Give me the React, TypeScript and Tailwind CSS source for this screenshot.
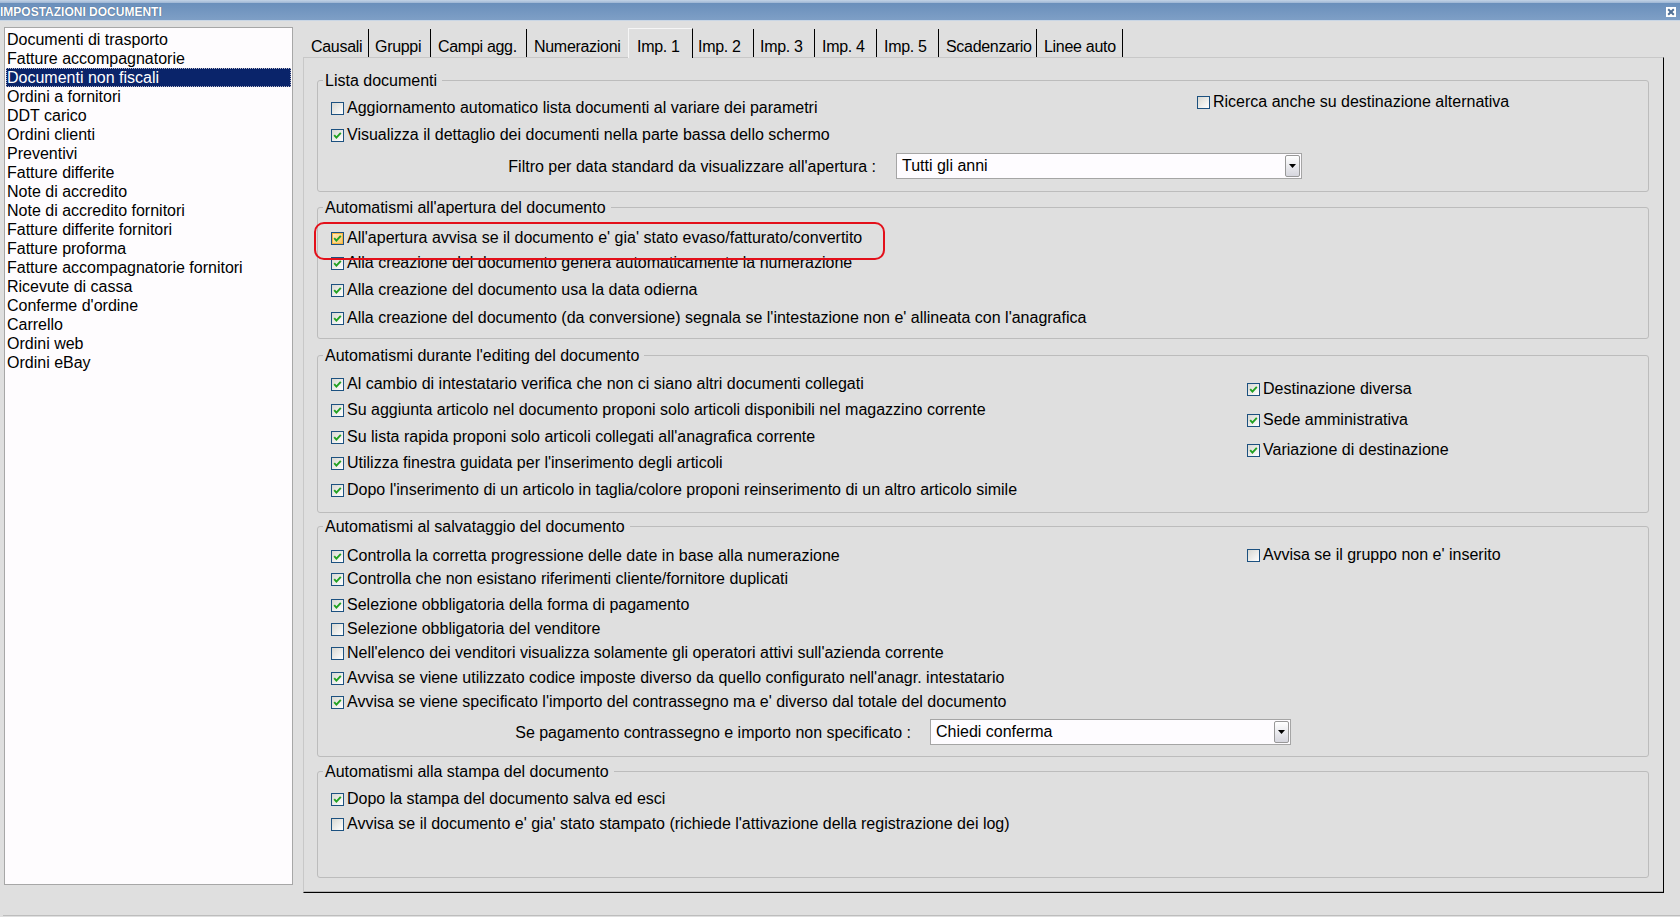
import React from 'react';

type Row = { mt: string; on: boolean; text: string; hot?: boolean };

const docTypes = [
  'Documenti di trasporto',
  'Fatture accompagnatorie',
  'Documenti non fiscali',
  'Ordini a fornitori',
  'DDT carico',
  'Ordini clienti',
  'Preventivi',
  'Fatture differite',
  'Note di accredito',
  'Note di accredito fornitori',
  'Fatture differite fornitori',
  'Fatture proforma',
  'Fatture accompagnatorie fornitori',
  'Ricevute di cassa',
  'Conferme d\'ordine',
  'Carrello',
  'Ordini web',
  'Ordini eBay',
];

const tabs = [
  { label: 'Causali', cls: 'w-[66px] pl-[8px]' },
  { label: 'Gruppi', cls: 'w-[62px] pl-[6px]' },
  { label: 'Campi agg.', cls: 'w-[96px] pl-[7px]' },
  { label: 'Numerazioni', cls: 'w-[101px] pl-[7px] border-r-0' },
  { label: 'Imp. 1', cls: 'w-[65px] pl-[8px]', active: true },
  { label: 'Imp. 2', cls: 'w-[61px] pl-[5px]' },
  { label: 'Imp. 3', cls: 'w-[61px] pl-[6px]' },
  { label: 'Imp. 4', cls: 'w-[62px] pl-[7px]' },
  { label: 'Imp. 5', cls: 'w-[62px] pl-[7px]' },
  { label: 'Scadenzario', cls: 'w-[98px] pl-[7px]' },
  { label: 'Linee auto', cls: 'w-[86px] pl-[7px]' },
];

const apertura: Row[] = [
  { mt: 'mt-[21px]', on: true, hot: true, text: 'All\'apertura avvisa se il documento e\' gia\' stato evaso/fatturato/convertito' },
  { mt: 'mt-[7px]', on: true, text: 'Alla creazione del documento genera automaticamente la numerazione' },
  { mt: 'mt-[9px]', on: true, text: 'Alla creazione del documento usa la data odierna' },
  { mt: 'mt-[10px]', on: true, text: 'Alla creazione del documento (da conversione) segnala se l\'intestazione non e\' allineata con l\'anagrafica' },
];

const editing: Row[] = [
  { mt: 'mt-[19px]', on: true, text: 'Al cambio di intestatario verifica che non ci siano altri documenti collegati' },
  { mt: 'mt-[8px]', on: true, text: 'Su aggiunta articolo nel documento proponi solo articoli disponibili nel magazzino corrente' },
  { mt: 'mt-[9px]', on: true, text: 'Su lista rapida proponi solo articoli collegati all\'anagrafica corrente' },
  { mt: 'mt-[8px]', on: true, text: 'Utilizza finestra guidata per l\'inserimento degli articoli' },
  { mt: 'mt-[9px]', on: true, text: 'Dopo l\'inserimento di un articolo in taglia/colore proponi reinserimento di un altro articolo simile' },
];

const editingRight: Row[] = [
  { mt: 'mt-[24px]', on: true, text: 'Destinazione diversa' },
  { mt: 'mt-[13px]', on: true, text: 'Sede amministrativa' },
  { mt: 'mt-[12px]', on: true, text: 'Variazione di destinazione' },
];

const salvataggio: Row[] = [
  { mt: 'mt-[20px]', on: true, text: 'Controlla la corretta progressione delle date in base alla numerazione' },
  { mt: 'mt-[5px]', on: true, text: 'Controlla che non esistano riferimenti cliente/fornitore duplicati' },
  { mt: 'mt-[8px]', on: true, text: 'Selezione obbligatoria della forma di pagamento' },
  { mt: 'mt-[6px]', on: false, text: 'Selezione obbligatoria del venditore' },
  { mt: 'mt-[6px]', on: false, text: 'Nell\'elenco dei venditori visualizza solamente gli operatori attivi sull\'azienda corrente' },
  { mt: 'mt-[7px]', on: true, text: 'Avvisa se viene utilizzato codice imposte diverso da quello configurato nell\'anagr. intestatario' },
  { mt: 'mt-[6px]', on: true, text: 'Avvisa se viene specificato l\'importo del contrassegno ma e\' diverso dal totale del documento' },
];

const stampa: Row[] = [
  { mt: 'mt-[18px]', on: true, text: 'Dopo la stampa del documento salva ed esci' },
  { mt: 'mt-[7px]', on: false, text: 'Avvisa se il documento e\' gia\' stato stampato (richiede l\'attivazione della registrazione dei log)' },
];

function Check({ on, hot }: { on: boolean; hot?: boolean }) {
  return (
    <span
      className={`flex h-[13px] w-[13px] shrink-0 items-center justify-center border border-[#1c5180] ${
        hot
          ? 'bg-gradient-to-br from-[#fff0c4] to-[#f6c35c] shadow-[inset_0_0_0_1px_#f8b33c]'
          : 'bg-gradient-to-br from-[#d8d8d2] to-white'
      }`}
    >
      {on && (
        <svg width="9" height="9" viewBox="0 0 9 9">
          <path d="M1.2 4.2 L3.4 6.6 L7.8 1.8" stroke="#21a121" strokeWidth="1.9" fill="none" />
        </svg>
      )}
    </span>
  );
}

function CheckRow({ row }: { row: Row }) {
  return (
    <div className={`flex h-[18px] items-center gap-[3px] whitespace-nowrap ${row.mt}`}>
      <Check on={row.on} hot={row.hot} />
      <span>{row.text}</span>
    </div>
  );
}

function Group({ title, cls, children }: { title: string; cls: string; children: React.ReactNode }) {
  return (
    <div className={`relative w-[1332px] rounded-[3px] border border-[#bcbcbc] pl-[13px] ${cls}`}>
      <span className="absolute left-[5px] top-[-9px] bg-[#dfdfdf] pl-[2px] pr-[5px] leading-[18px]">{title}</span>
      {children}
    </div>
  );
}

function Combo({ value, cls }: { value: string; cls: string }) {
  return (
    <div className={`flex h-[26px] items-center justify-between border border-[#a5a5a5] bg-[#fefcff] pl-[5px] pr-[1px] ${cls}`}>
      <span>{value}</span>
      <span className="flex h-[22px] w-[15px] items-center justify-center rounded-[2px] border border-[#989898] bg-gradient-to-b from-white to-[#d6d6de]">
        <svg width="7" height="4" viewBox="0 0 7 4">
          <path d="M0 0 H7 L3.5 4 Z" fill="#000" />
        </svg>
      </span>
    </div>
  );
}

export default function App() {
  return (
    <div className="relative flex h-[917px] w-[1680px] flex-col overflow-hidden bg-[#dfdfdf] text-[16px] text-black [font-family:'Liberation_Sans',Arial,sans-serif]">
      {/* Top strip */}
      <div className="h-[3px] bg-gradient-to-b from-[#c3d3e6] to-[#9db6d4]" />

      {/* Title bar */}
      <div className="flex h-[18px] items-center justify-between border-b border-[#c9d6e5] bg-gradient-to-b from-[#6a8fbb] to-[#7e9fc6] pr-[4px]">
        <span className="text-[12px] font-bold leading-none text-white [text-shadow:0_0_1px_#2b4a70]">IMPOSTAZIONI DOCUMENTI</span>
        <svg width="10" height="10" viewBox="0 0 10 10">
          <rect x="0" y="0" width="10" height="10" fill="#ffffff" />
          <path d="M2.2 2.2 L7.8 7.8 M7.8 2.2 L2.2 7.8" stroke="#4f6f96" strokeWidth="2" />
        </svg>
      </div>

      {/* Body */}
      <div className="flex h-[894px] items-start pl-[4px] pt-[6px]">
        {/* Document type list */}
        <div className="h-[858px] w-[289px] shrink-0 border border-[#a7a7a7] bg-[#fefcfe] pt-[2px]">
          {docTypes.map((d, i) => (
            <div
              key={d}
              className={`mx-[1px] h-[19px] whitespace-nowrap pl-[1px] pt-[1px] leading-[18px] ${
                i === 2 ? 'bg-[#0a246a] text-white outline-1 -outline-offset-1 outline-dotted outline-[#b9b9c8]' : ''
              }`}
            >
              {d}
            </div>
          ))}
        </div>

        {/* Tab control */}
        <div className="ml-[10px] mt-[1px] w-[1361px] shrink-0">
          <div className="flex h-[29px] items-end tracking-[-0.3px]">
            {tabs.map((t) =>
              t.active ? (
                <div
                  key={t.label}
                  className={`relative z-10 -mb-[1px] h-[30px] shrink-0 whitespace-nowrap border-l border-t border-r border-l-[#f6f6f6] border-t-[#f6f6f6] border-r-black bg-[#dfdfdf] pt-[9px] leading-[18px] ${t.cls}`}
                >
                  {t.label}
                </div>
              ) : (
                <div
                  key={t.label}
                  className={`h-[28px] shrink-0 whitespace-nowrap border-r border-black pt-[9px] leading-[18px] ${t.cls}`}
                >
                  {t.label}
                </div>
              ),
            )}
          </div>

          <div className="h-[836px] border-l border-t border-r border-b border-l-[#c8c8c8] border-t-[#c8c8c8] border-r-black border-b-black pl-[13px] shadow-[inset_0_-1px_0_#b5b5b5]">
            {/* Lista documenti */}
            <Group title="Lista documenti" cls="mt-[22px] h-[112px]">
              <div className="flex">
                <div className="w-[866px]">
                  <CheckRow row={{ mt: 'mt-[18px]', on: false, text: 'Aggiornamento automatico lista documenti al variare dei parametri' }} />
                  <CheckRow row={{ mt: 'mt-[9px]', on: true, text: 'Visualizza il dettaglio dei documenti nella parte bassa dello schermo' }} />
                </div>
                <CheckRow row={{ mt: 'mt-[12px]', on: false, text: 'Ricerca anche su destinazione alternativa' }} />
              </div>
              <div className="mt-[9px] flex items-center">
                <span className="w-[545px] whitespace-nowrap pt-[2px] text-right">Filtro per data standard da visualizzare all'apertura :</span>
                <Combo value="Tutti gli anni" cls="ml-[20px] w-[406px]" />
              </div>
            </Group>

            {/* Apertura */}
            <Group title="Automatismi all'apertura del documento" cls="mt-[15px] h-[132px]">
              {apertura.map((r) => (
                <CheckRow key={r.text} row={r} />
              ))}
            </Group>

            {/* Editing */}
            <Group title="Automatismi durante l'editing del documento" cls="mt-[16px] h-[158px]">
              <div className="flex">
                <div className="w-[916px]">
                  {editing.map((r) => (
                    <CheckRow key={r.text} row={r} />
                  ))}
                </div>
                <div>
                  {editingRight.map((r) => (
                    <CheckRow key={r.text} row={r} />
                  ))}
                </div>
              </div>
            </Group>

            {/* Salvataggio */}
            <Group title="Automatismi al salvataggio del documento" cls="mt-[13px] h-[231px]">
              <div className="flex">
                <div className="w-[916px]">
                  {salvataggio.map((r) => (
                    <CheckRow key={r.text} row={r} />
                  ))}
                </div>
                <CheckRow row={{ mt: 'mt-[19px]', on: false, text: 'Avvisa se il gruppo non e\' inserito' }} />
              </div>
              <div className="mt-[8px] flex items-center">
                <span className="w-[580px] whitespace-nowrap pt-[2px] text-right">Se pagamento contrassegno e importo non specificato :</span>
                <Combo value="Chiedi conferma" cls="ml-[19px] w-[361px]" />
              </div>
            </Group>

            {/* Stampa */}
            <Group title="Automatismi alla stampa del documento" cls="mt-[14px] h-[107px]">
              {stampa.map((r) => (
                <CheckRow key={r.text} row={r} />
              ))}
            </Group>
          </div>
        </div>
      </div>

      {/* Bottom edge */}
      <div className="ml-[3px] h-[2px] border-t border-[#bdbdbd]" />

      {/* Annotation */}
      <div className="pointer-events-none absolute left-[314px] top-[222px] h-[38px] w-[571px] rounded-[10px] border-2 border-[#e3101a]" />
    </div>
  );
}
